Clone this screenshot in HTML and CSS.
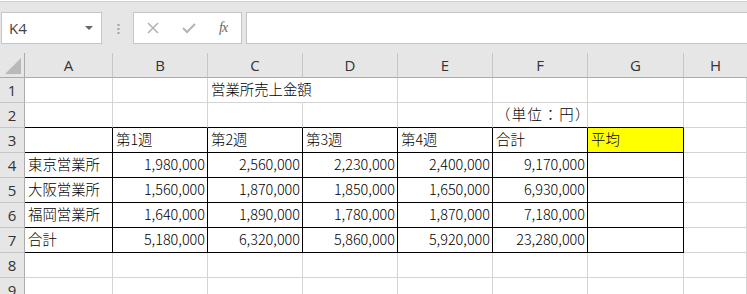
FILE: index.html
```html
<!DOCTYPE html>
<html lang="ja">
<head>
    <meta charset="UTF-8">
    <title>営業所売上金額</title>
    <link rel="stylesheet" href="styles.css">
</head>
<body>
    <div class="toolbar">
        <div class="name-box">
            <span>K4</span>
            <span class="caret"></span>
        </div>
        <div class="grip"></div>
        <div class="fx-buttons">
            <svg class="btn-cancel" width="14" height="14" viewBox="0 0 14 14"><path d="M2 2 L12 12 M12 2 L2 12" stroke="#b4b4b4" stroke-width="1.6" fill="none"/></svg>
            <svg class="btn-enter" width="16" height="14" viewBox="0 0 16 14"><path d="M2 7 L6 11 L14 3" stroke="#b4b4b4" stroke-width="2" fill="none"/></svg>
            <span class="fx">fx</span>
        </div>
        <div class="formula"></div>
    </div>

    <div class="sheet">
        <div class="corner"><span class="tri"></span></div>
        <div class="col-head">A</div>
        <div class="col-head">B</div>
        <div class="col-head">C</div>
        <div class="col-head">D</div>
        <div class="col-head">E</div>
        <div class="col-head">F</div>
        <div class="col-head">G</div>
        <div class="col-head last">H</div>

        <!-- row 1 -->
        <div class="row-head">1</div>
        <div class="cell"></div>
        <div class="cell"></div>
        <div class="cell wide">営業所売上金額</div>
        <div class="cell"></div>
        <div class="cell"></div>
        <div class="cell"></div>
        <div class="cell"></div>

        <!-- row 2 -->
        <div class="row-head">2</div>
        <div class="cell bb"></div>
        <div class="cell bb"></div>
        <div class="cell bb"></div>
        <div class="cell bb"></div>
        <div class="cell bb"></div>
        <div class="cell bb num unit">（単位：円）</div>
        <div class="cell bb"></div>
        <div class="cell"></div>

        <!-- row 3 -->
        <div class="row-head">3</div>
        <div class="cell box"></div>
        <div class="cell box">第1週</div>
        <div class="cell box">第2週</div>
        <div class="cell box">第3週</div>
        <div class="cell box">第4週</div>
        <div class="cell box">合計</div>
        <div class="cell box yellow">平均</div>
        <div class="cell"></div>

        <!-- row 4 -->
        <div class="row-head">4</div>
        <div class="cell box">東京営業所</div>
        <div class="cell box num">1,980,000</div>
        <div class="cell box num">2,560,000</div>
        <div class="cell box num">2,230,000</div>
        <div class="cell box num">2,400,000</div>
        <div class="cell box num">9,170,000</div>
        <div class="cell box"></div>
        <div class="cell"></div>

        <!-- row 5 -->
        <div class="row-head">5</div>
        <div class="cell box">大阪営業所</div>
        <div class="cell box num">1,560,000</div>
        <div class="cell box num">1,870,000</div>
        <div class="cell box num">1,850,000</div>
        <div class="cell box num">1,650,000</div>
        <div class="cell box num">6,930,000</div>
        <div class="cell box"></div>
        <div class="cell"></div>

        <!-- row 6 -->
        <div class="row-head">6</div>
        <div class="cell box">福岡営業所</div>
        <div class="cell box num">1,640,000</div>
        <div class="cell box num">1,890,000</div>
        <div class="cell box num">1,780,000</div>
        <div class="cell box num">1,870,000</div>
        <div class="cell box num">7,180,000</div>
        <div class="cell box"></div>
        <div class="cell"></div>

        <!-- row 7 -->
        <div class="row-head">7</div>
        <div class="cell box">合計</div>
        <div class="cell box num">5,180,000</div>
        <div class="cell box num">6,320,000</div>
        <div class="cell box num">5,860,000</div>
        <div class="cell box num">5,920,000</div>
        <div class="cell box num">23,280,000</div>
        <div class="cell box"></div>
        <div class="cell"></div>

        <!-- row 8 -->
        <div class="row-head">8</div>
        <div class="cell"></div>
        <div class="cell"></div>
        <div class="cell"></div>
        <div class="cell"></div>
        <div class="cell"></div>
        <div class="cell"></div>
        <div class="cell"></div>
        <div class="cell"></div>

        <!-- row 9 -->
        <div class="row-head">9</div>
        <div class="cell"></div>
        <div class="cell"></div>
        <div class="cell"></div>
        <div class="cell"></div>
        <div class="cell"></div>
        <div class="cell"></div>
        <div class="cell"></div>
        <div class="cell"></div>
    </div>
</body>
</html>
```

FILE: styles.css
```css
* {
    box-sizing: border-box;
}
body {
    margin: 0;
    width: 747px;
    height: 294px;
    overflow: hidden;
    background: #fff;
    font-family: "Noto Sans CJK JP", "Noto Sans", sans-serif;
}
.toolbar {
    height: 53px;
    background: #e6e6e6;
    border-top: 1px solid #d0d0d0;
    margin-top: 1px;
    display: flex;
    align-items: flex-start;
    padding-top: 10px;
    padding-left: 1px;
}
.name-box {
    width: 101px;
    height: 32px;
    background: #fff;
    border: 1px solid #c6c6c6;
    display: flex;
    align-items: center;
    justify-content: space-between;
    padding: 0 8px 0 7px;
    font-family: "Open Sans", sans-serif;
    font-size: 15px;
    color: #444;
}
.caret {
    width: 0;
    height: 0;
    border-left: 4px solid transparent;
    border-right: 4px solid transparent;
    border-top: 4px solid #666;
}
.grip {
    width: 31px;
    height: 32px;
    background: radial-gradient(circle, #a8a8a8 1px, transparent 1.3px);
    background-size: 3px 4px;
    background-position: 15px 11px;
    background-repeat: repeat-y;
    background-clip: content-box;
    padding: 10px 0 9px;
}
.fx-buttons {
    width: 109px;
    height: 32px;
    background: #fff;
    border: 1px solid #c6c6c6;
    display: flex;
    align-items: center;
    padding-left: 12px;
}
.btn-enter {
    margin-left: 21px;
}
.fx {
    margin-left: 22px;
    font-family: "Liberation Serif", serif;
    font-style: italic;
    font-size: 14px;
    color: #666;
    letter-spacing: -1px;
}
.formula {
    flex: 1;
    height: 32px;
    margin-left: 4px;
    background: #fff;
    border: 1px solid #c6c6c6;
    border-right: none;
}
.sheet {
    display: grid;
    grid-template-columns: 25px 88px 95px 95px 95px 95px 95px 96px 1fr;
    grid-auto-rows: 25px;
    margin-top: -1px;
}
.corner {
    background: #e6e6e6;
    border-right: 1px solid #ababab;
    border-bottom: 1px solid #ababab;
    position: relative;
}
.tri {
    position: absolute;
    right: 3px;
    bottom: 3px;
    width: 0;
    height: 0;
    border-left: 16px solid transparent;
    border-bottom: 16px solid #b9b9b9;
}
.col-head {
    background: #e6e6e6;
    border-bottom: 1px solid #ababab;
    border-right: 1px solid #c6c6c6;
    display: flex;
    align-items: center;
    justify-content: center;
    padding-bottom: 1px;
    font-family: "Open Sans", sans-serif;
    font-size: 15px;
    color: #333;
}
.col-head.last {
    border-right: none;
}
.row-head {
    background: #e6e6e6;
    border-right: 1px solid #ababab;
    border-bottom: 1px solid #c6c6c6;
    display: flex;
    align-items: center;
    justify-content: center;
    font-family: "Open Sans", sans-serif;
    font-size: 15px;
    color: #333;
}
.cell {
    border-right: 1px solid #d4d4d4;
    border-bottom: 1px solid #d4d4d4;
    padding: 0 3px;
    font-size: 14.4px;
    font-weight: 300;
    line-height: 22px;
    color: #000;
    white-space: nowrap;
}
.wide {
    grid-column: span 2;
}
.num {
    text-align: right;
    padding-right: 2px;
}
.unit {
    letter-spacing: 1.4px;
    padding-right: 1px;
}
.bb {
    border-bottom-color: #000;
}
.box {
    border-right-color: #000;
    border-bottom-color: #000;
}
.yellow {
    background: #ffff00;
}
```
